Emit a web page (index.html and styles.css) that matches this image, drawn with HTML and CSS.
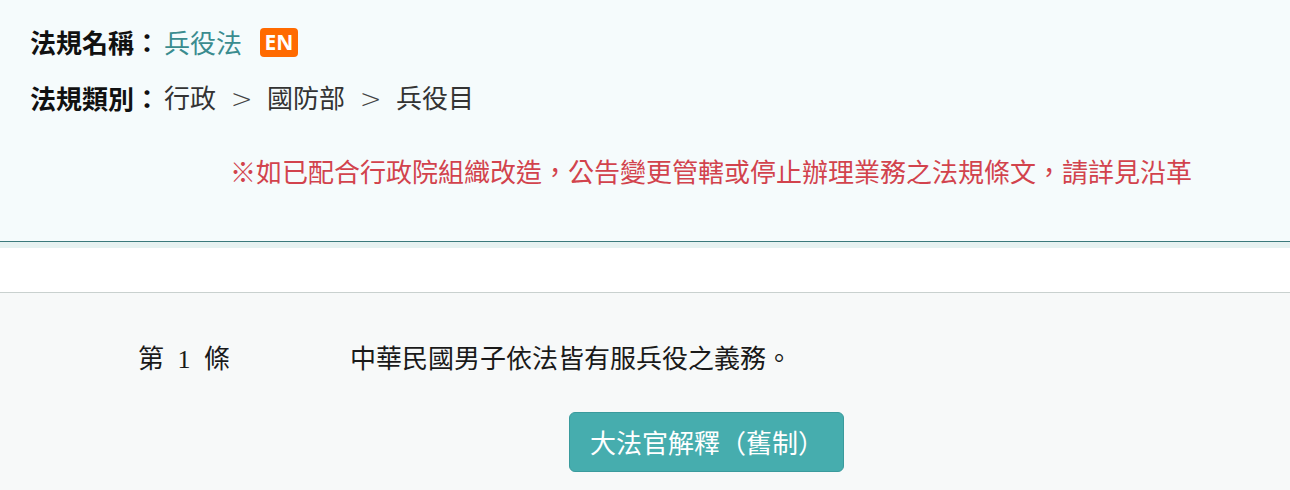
FILE: index.html
```html
<!DOCTYPE html>
<html lang="zh-Hant">
<head>
    <meta charset="UTF-8">
    <meta name="viewport" content="width=device-width, initial-scale=1.0">
    <title>兵役法</title>
    <link rel="stylesheet" href="styles.css">
</head>
<body>
    <div class="law-head">
        <div class="law-row">
            <span class="label">法規名稱：</span><a class="law-name" href="#">兵役法</a><a class="badge-en" href="#">EN</a>
        </div>
        <div class="law-row">
            <span class="label">法規類別：</span><span class="value">行政<span class="sep">&gt;</span>國防部<span class="sep">&gt;</span>兵役目</span>
        </div>
        <div class="notice">※如已配合行政院組織改造，公告變更管轄或停止辦理業務之法規條文，請詳見沿革</div>
    </div>
    <div class="head-band"></div>
    <div class="spacer"></div>

    <div class="articles">
        <div class="article">
            <div class="art-no">第 1 條</div>
            <div class="art-text">中華民國男子依法皆有服兵役之義務。</div>
        </div>
        <div class="art-actions">
            <a class="btn-interp" href="#">大法官解釋（舊制）</a>
        </div>
    </div>
</body>
</html>
```

FILE: styles.css
```css
body {
    margin: 0;
    font-family: "Noto Sans CJK TC", "Noto Sans", sans-serif;
    background-color: #f7f9f9;
    color: #222;
}

a {
    text-decoration: none;
}

.law-head {
    background-color: #f5fbfc;
    padding: 14px 0 50px 30px;
    border-bottom: 1px solid #3b7a7c;
    font-size: 26px;
}

.law-row {
    display: flex;
    align-items: center;
    height: 56px;
    line-height: 56px;
}

.label {
    font-weight: bold;
    color: #111;
    margin-right: 4px;
}

.law-name {
    color: #3a8c8f;
}

.badge-en {
    display: inline-block;
    margin-left: 18px;
    width: 38px;
    height: 29px;
    line-height: 29px;
    border-radius: 4px;
    background-color: #ff6a00;
    color: #fff;
    font-family: "Open Sans", "Liberation Sans", sans-serif;
    font-weight: bold;
    font-size: 21px;
    text-align: center;
}

.value {
    color: #333;
}

.sep {
    display: inline-block;
    width: 51px;
    text-align: center;
    font-family: "DejaVu Sans", sans-serif;
    font-weight: 300;
    font-size: 26px;
    color: #444;
}

.notice {
    margin-top: 25px;
    height: 40px;
    line-height: 40px;
    text-align: right;
    padding-right: 98px;
    color: #d2434d;
}

.head-band {
    height: 6px;
    background-color: #e6f2f1;
}

.spacer {
    height: 44px;
    background-color: #fff;
    border-bottom: 1px solid #c9d1cf;
}

.articles {
    padding-top: 47px;
    font-size: 26px;
}

.article {
    display: flex;
    height: 40px;
    line-height: 40px;
    font-family: "Liberation Serif", "Noto Sans CJK TC", serif;
    color: #1a1a1a;
}

.art-no {
    width: 212px;
    padding-left: 138px;
    word-spacing: 7px;
}

.art-actions {
    margin-top: 32px;
    padding-left: 569px;
}

.btn-interp {
    display: inline-block;
    height: 58px;
    line-height: 58px;
    padding: 0 19px 0 20px;
    border: 1px solid #3a9b9d;
    border-radius: 6px;
    background-color: #46adae;
    color: #fff;
}
```
